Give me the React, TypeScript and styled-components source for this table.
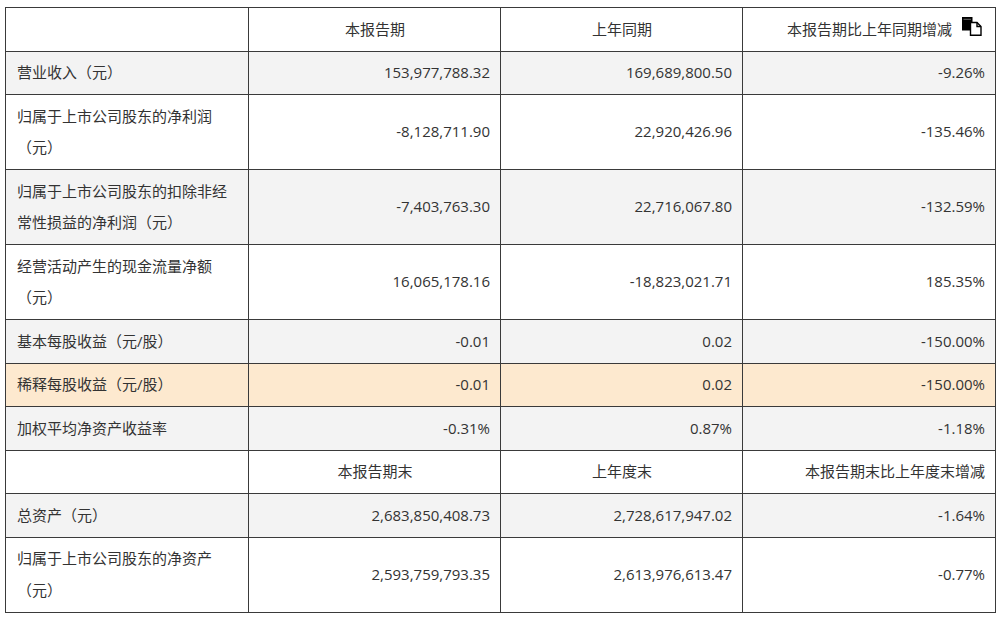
import React from 'react'
import styled, { createGlobalStyle } from 'styled-components'

const GlobalStyle = createGlobalStyle`
  html, body {
    margin: 0;
    padding: 0;
    background: #fff;
  }
  body {
    font-family: 'Open Sans', 'Noto Sans CJK SC', sans-serif;
    color: #333;
  }
`

type Row = {
  label: string
  cells: [string, string, string]
  head?: boolean
}

const columnWidths = [243, 252, 242, 253]

const rows: Row[] = [
  { label: '', cells: ['本报告期', '上年同期', '本报告期比上年同期增减'], head: true },
  { label: '营业收入（元）', cells: ['153,977,788.32', '169,689,800.50', '-9.26%'] },
  { label: '归属于上市公司股东的净利润（元）', cells: ['-8,128,711.90', '22,920,426.96', '-135.46%'] },
  { label: '归属于上市公司股东的扣除非经常性损益的净利润（元）', cells: ['-7,403,763.30', '22,716,067.80', '-132.59%'] },
  { label: '经营活动产生的现金流量净额（元）', cells: ['16,065,178.16', '-18,823,021.71', '185.35%'] },
  { label: '基本每股收益（元/股）', cells: ['-0.01', '0.02', '-150.00%'] },
  { label: '稀释每股收益（元/股）', cells: ['-0.01', '0.02', '-150.00%'] },
  { label: '加权平均净资产收益率', cells: ['-0.31%', '0.87%', '-1.18%'] },
  { label: '', cells: ['本报告期末', '上年度末', '本报告期末比上年度末增减'], head: true },
  { label: '总资产（元）', cells: ['2,683,850,408.73', '2,728,617,947.02', '-1.64%'] },
  { label: '归属于上市公司股东的净资产（元）', cells: ['2,593,759,793.35', '2,613,976,613.47', '-0.77%'] },
]

// the row under the pointer in the screenshot
const HOVER_ROW = 6

export default function App() {
  return (
    <>
      <GlobalStyle />
      <Page>
        <Table>
          <colgroup>
            {columnWidths.map((w, i) => (
              <Col key={i} $w={w} />
            ))}
          </colgroup>
          <tbody>
            {rows.map((row, i) => (
              <TableRow key={i} $tone={i === HOVER_ROW ? 'hover' : i % 2 === 1 ? 'stripe' : 'plain'}>
                <LabelCell>{row.label}</LabelCell>
                {row.cells.map((c, j) => {
                  if (!row.head) return <NumCell key={j}>{c}</NumCell>
                  const last = j === 2
                  const withCopy = i === 0 && last
                  return (
                    <HeadCell key={j} $right={last} $tight={withCopy}>
                      {c}
                      {withCopy && (
                        <CopyButton title="复制">
                          <CopyIcon />
                        </CopyButton>
                      )}
                    </HeadCell>
                  )
                })}
              </TableRow>
            ))}
          </tbody>
        </Table>
      </Page>
    </>
  )
}

function CopyIcon() {
  return (
    <svg width="20" height="19" viewBox="0 0 20 19">
      <rect x="0" y="0" width="10.5" height="13.5" fill="#000" />
      <rect x="1.5" y="1.8" width="7.5" height="1" fill="#666" />
      <path
        d="M8.5 5.5 H15 L19 9.5 V18.3 H8.5 Z"
        fill="#fff"
        stroke="#000"
        strokeWidth="1.4"
        strokeLinejoin="miter"
      />
      <path d="M15 5.5 V9.5 H19" fill="none" stroke="#000" strokeWidth="1.4" />
    </svg>
  )
}

const Page = styled.div`
  padding: 7px 5px 0 5px;
`

const Table = styled.table`
  width: 990px;
  table-layout: fixed;
  border-collapse: collapse;
  font-size: 15px;
  line-height: 31.5px;
  color: #333;
`

const Col = styled.col<{ $w: number }>`
  width: ${(p) => p.$w}px;
`

const TableRow = styled.tr<{ $tone: 'plain' | 'stripe' | 'hover' }>`
  background: ${(p) =>
    p.$tone === 'hover' ? '#fde9cf' : p.$tone === 'stripe' ? '#f3f3f3' : '#fff'};
`

const Cell = styled.td`
  border: 1px solid #3a3a3a;
  padding: 5.5px 10px 5.5px 11px;
  vertical-align: middle;
  word-break: break-all;
`

const LabelCell = styled(Cell)`
  text-align: left;
`

const NumCell = styled(Cell)`
  text-align: right;
`

const HeadCell = styled(Cell)<{ $right?: boolean; $tight?: boolean }>`
  text-align: ${(p) => (p.$right ? 'right' : 'center')};
  padding-right: ${(p) => (p.$tight ? '13px' : '10px')};
  white-space: nowrap;
`

const CopyButton = styled.span`
  display: inline-block;
  margin-left: 10px;
  vertical-align: -1px;
  line-height: 0;
  cursor: pointer;
`
